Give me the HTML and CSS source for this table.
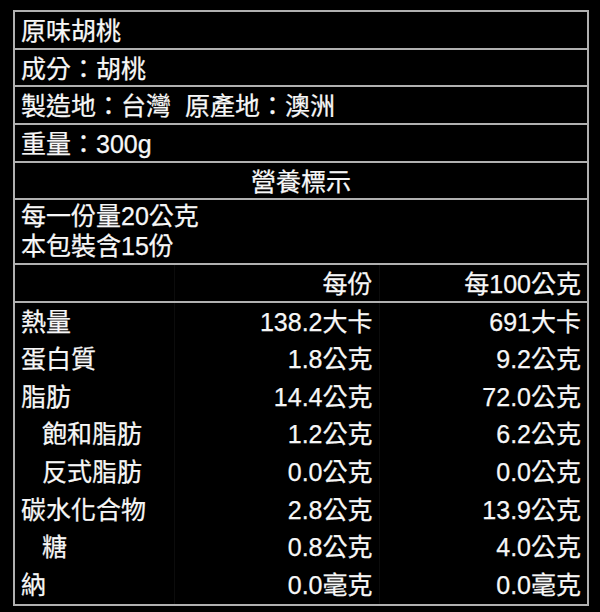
FILE: index.html
```html
<!DOCTYPE html>
<html lang="zh-Hant">
<head>
<meta charset="utf-8">
<title>原味胡桃 營養標示</title>
<link rel="stylesheet" href="styles.css">
</head>
<body>
<table class="label">
  <colgroup>
    <col class="c1">
    <col class="c2">
    <col class="c3">
  </colgroup>
  <tbody>
    <tr class="info"><td colspan="3">原味胡桃</td></tr>
    <tr class="info"><td colspan="3">成分：胡桃</td></tr>
    <tr class="info"><td colspan="3">製造地：台灣&nbsp;&nbsp;原產地：澳洲</td></tr>
    <tr class="info"><td colspan="3">重量：300g</td></tr>
    <tr class="info"><td colspan="3" class="title">營養標示</td></tr>
    <tr class="serving"><td colspan="3">每一份量20公克<br>本包裝含15份</td></tr>
    <tr class="head">
      <td></td>
      <td class="num">每份</td>
      <td class="num">每100公克</td>
    </tr>
    <tr class="nut first"><td>熱量</td><td class="num">138.2大卡</td><td class="num">691大卡</td></tr>
    <tr class="nut"><td>蛋白質</td><td class="num">1.8公克</td><td class="num">9.2公克</td></tr>
    <tr class="nut"><td>脂肪</td><td class="num">14.4公克</td><td class="num">72.0公克</td></tr>
    <tr class="nut"><td class="sub">飽和脂肪</td><td class="num">1.2公克</td><td class="num">6.2公克</td></tr>
    <tr class="nut"><td class="sub">反式脂肪</td><td class="num">0.0公克</td><td class="num">0.0公克</td></tr>
    <tr class="nut"><td>碳水化合物</td><td class="num">2.8公克</td><td class="num">13.9公克</td></tr>
    <tr class="nut"><td class="sub">糖</td><td class="num">0.8公克</td><td class="num">4.0公克</td></tr>
    <tr class="nut last"><td>納</td><td class="num">0.0毫克</td><td class="num">0.0毫克</td></tr>
  </tbody>
</table>
</body>
</html>
```

FILE: styles.css
```css
html, body {
  margin: 0;
  background: #000;
}

body {
  padding: 10px 13px;
}

.label {
  border-collapse: collapse;
  table-layout: fixed;
  width: 574px;
  font-family: "Liberation Sans", "Noto Sans CJK TC", sans-serif;
  font-size: 25px;
  line-height: 28px;
  color: #f7f7f7;
  -webkit-text-stroke: 0.25px #f7f7f7;
  border: 2px solid #b0b0b0;
}

.c1 { width: 160px; }
.c2 { width: 205px; }
.c3 { width: 209px; }

.label td {
  padding: 0 6px;
  white-space: nowrap;
  vertical-align: middle;
}

.info td,
.head td {
  height: 33.7px;
  padding-top: 2px;
  padding-bottom: 0;
  border-bottom: 2px solid #b0b0b0;
}

.title {
  text-align: center;
}

.serving td {
  height: 60.7px;
  padding-top: 1px;
  padding-bottom: 1px;
  line-height: 29.5px;
  border-bottom: 2px solid #b0b0b0;
}

.nut td {
  height: 37.6px;
}

.head td + td,
.nut td + td {
  border-left: 1px solid #0c0c0c;
}

.num {
  text-align: right;
}

.label td.sub {
  padding-left: 27px;
}
```
